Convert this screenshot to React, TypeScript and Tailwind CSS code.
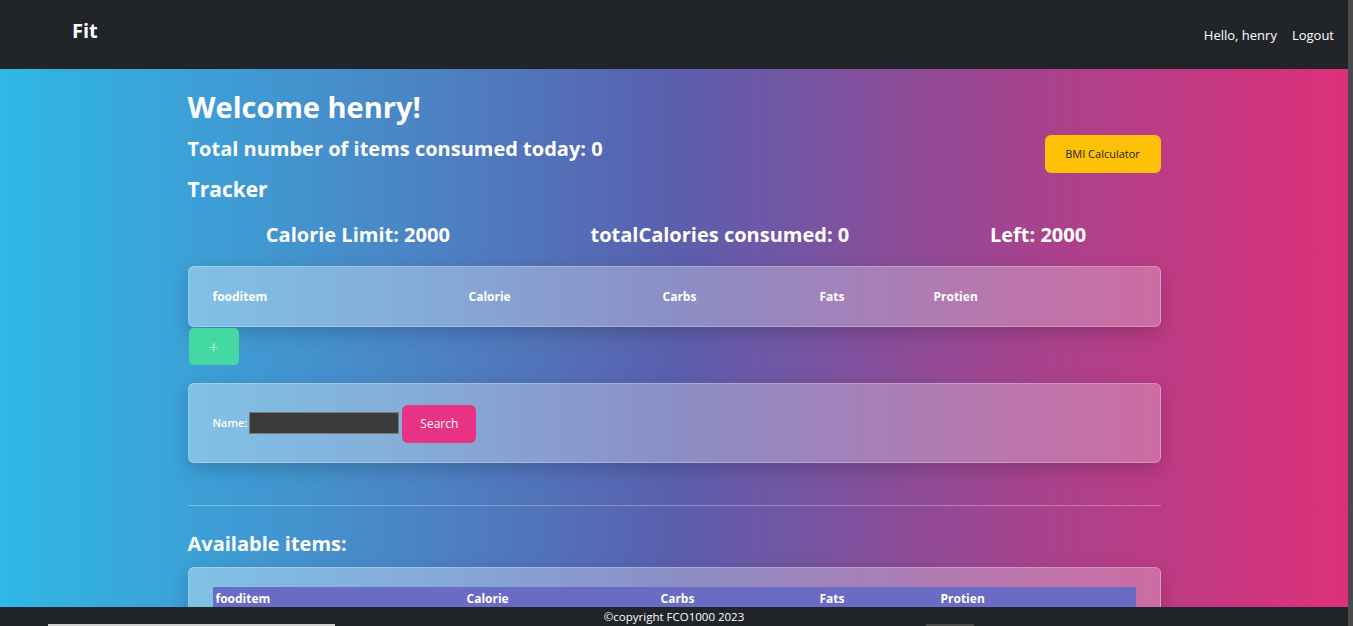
const font = { fontFamily: '"Open Sans", "Noto Sans", sans-serif' }

const trackerCols = ['fooditem', 'Calorie', 'Carbs', 'Fats', 'Protien']

const Navbar = () => (
  <nav className="flex h-[69px] shrink-0 items-start justify-between bg-[#212529] pl-[72px] pr-[14px] text-white">
    <span className="mt-[16px] text-[20px] font-bold">Fit</span>
    <div className="mt-[26px] flex gap-[15px] text-[13px]">
      <span>Hello, henry</span>
      <span>Logout</span>
    </div>
  </nav>
)

const Card = ({ children, className = '' }: { children: React.ReactNode; className?: string }) => (
  <div
    className={`rounded-[6px] border border-white/25 bg-gradient-to-r from-white/35 to-white/25 shadow-[0_6px_18px_rgba(0,0,0,0.18)] ${className}`}
  >
    {children}
  </div>
)

export default function App() {
  return (
    <div className="relative flex h-[626px] w-[1353px] overflow-hidden text-white" style={font}>
      <div className="flex w-[1348px] flex-col">
        <Navbar />
        <main className="min-h-0 flex-1 overflow-hidden bg-[linear-gradient(90deg,#2fb8e6_0%,#4a86c6_30%,#5a5fae_50%,#a3448f_75%,#dd3079_100%)]">
          <div className="mx-auto w-[973px] pt-[20px]">
            <h1 className="text-[29px] leading-[36px] font-bold">Welcome henry!</h1>
            <div className="mt-[12px] flex items-start justify-between">
              <div>
                <h3 className="text-[20px] leading-[24px] font-bold">Total number of items consumed today: 0</h3>
                <h3 className="mt-[15px] text-[21px] leading-[26px] font-bold">Tracker</h3>
              </div>
              <button className="mt-[-2px] h-[38px] w-[116px] rounded-[6px] bg-[#ffc107] text-[11px] text-[#212529]">
                BMI Calculator
              </button>
            </div>
            <div className="mt-[20px] flex justify-around pl-[8px] pr-[-4px] text-[20px] leading-[26px] font-bold">
              <span>Calorie Limit: 2000</span>
              <span>totalCalories consumed: 0</span>
              <span className="mr-[4px]">Left: 2000</span>
            </div>
            <Card className="mt-[18px] h-[61px] px-[24px]">
              <div className="grid h-full grid-cols-[256px_194px_157px_114px_1fr] items-center text-[12px] font-bold">
                {trackerCols.map((c) => (
                  <span key={c}>{c}</span>
                ))}
              </div>
            </Card>
            <button className="mt-[1px] ml-[1px] flex h-[37px] w-[50px] items-center justify-center rounded-[5px] bg-[#44d9a2] text-[16px] font-light">
              +
            </button>
            <Card className="mt-[18px] flex h-[80px] items-center px-[24px]">
              <label className="text-[11px] font-semibold">Name:</label>
              <input className="ml-[2px] h-[22px] w-[150px] border border-[#7a7a7a] bg-[#3b3b3b]" />
              <button className="mt-[2px] ml-[3px] h-[38px] w-[74px] rounded-[6px] bg-[#e83283] text-[12px]">Search</button>
            </Card>
            <hr className="mt-[42px] border-white/30" />
            <h3 className="mt-[25px] text-[20px] leading-[26px] font-bold">Available items:</h3>
            <Card className="mt-[10px] h-[80px] px-[24px] pt-[19px]">
              <div className="grid h-[24px] grid-cols-[251px_194px_159px_121px_1fr] items-center bg-[#6a6bc4] pl-[3px] text-[12px] font-bold">
                {trackerCols.map((c) => (
                  <span key={c}>{c}</span>
                ))}
              </div>
            </Card>
          </div>
        </main>
      </div>
      <div className="w-[5px] bg-[#4a4a4a]" />
      <footer className="absolute bottom-0 left-0 h-[19px] w-[1348px] bg-[#212529] text-center text-[11.5px] leading-[19px]">
        ©copyright FCO1000 2023
        <div className="absolute bottom-0 left-[48px] h-[2px] w-[287px] bg-[#d0d0d0]" />
        <div className="absolute bottom-0 left-[926px] h-[2px] w-[48px] bg-[#4a4a4a]" />
      </footer>
    </div>
  )
}
